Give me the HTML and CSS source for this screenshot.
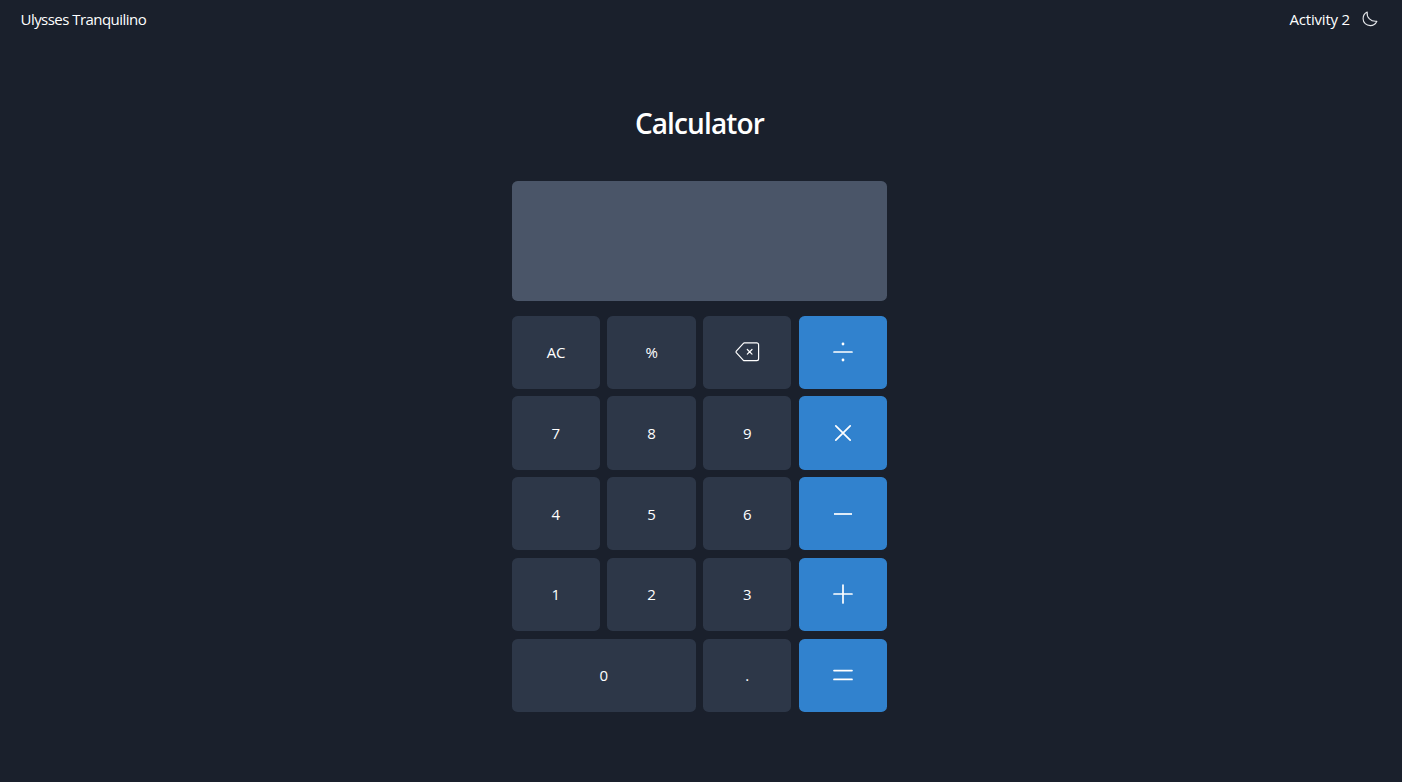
FILE: index.html
```html
<!DOCTYPE html>
<html lang="en">
<head>
<meta charset="utf-8">
<title>Calculator</title>
<link rel="stylesheet" href="styles.css">
</head>
<body>
<header class="topbar">
  <span class="author">Ulysses Tranquilino</span>
  <div class="topbar-right">
    <span class="activity">Activity 2</span>
    <svg class="moon" viewBox="0 0 16 16"><path d="M5.2 1.1C4.4 6.2 8.7 11 14.9 10.200C13.500 13.200 11.100 14.600 8.300 14.600C4.300 14.600 1.100 11.700 1.100 7.800C1.100 4.800 2.700 2.300 5.200 1.100Z"/></svg>
  </div>
</header>
<main class="calculator">
  <h1 class="title">Calculator</h1>
  <div class="display"></div>
  <div class="keys">
    <button class="key"><span class="label caps">AC</span></button>
    <button class="key"><span class="label percent">%</span></button>
    <button class="key"><svg class="icon backspace" viewBox="0 0 26 26"><path d="M10.400 3.900H22.700A1.900 1.900 0 0 1 24.600 5.800V19.800A1.900 1.900 0 0 1 22.700 21.700H10.400Q9.800 21.700 9.400 21.300L2.300 13.700Q1.700 12.900 2.300 12.100L9.400 4.300Q9.800 3.900 10.400 3.900Z"/><path d="M13.300 10.500l4.700 4.700M18 10.500l-4.700 4.700"/></svg></button>
    <button class="key operator"><svg class="icon" viewBox="0 0 26 26"><path d="M4 13H22"/><circle class="dot" cx="13" cy="5" r="1.400"/><circle class="dot" cx="13" cy="21" r="1.400"/></svg></button>
    <button class="key"><span class="label">7</span></button>
    <button class="key"><span class="label">8</span></button>
    <button class="key"><span class="label">9</span></button>
    <button class="key operator"><svg class="icon" viewBox="0 0 26 26"><path d="M5.800 5.800l14.400 14.400M20.200 5.800l-14.400 14.400"/></svg></button>
    <button class="key"><span class="label">4</span></button>
    <button class="key"><span class="label">5</span></button>
    <button class="key"><span class="label">6</span></button>
    <button class="key operator"><svg class="icon" viewBox="0 0 26 26"><path class="butt" d="M4 13H22"/></svg></button>
    <button class="key"><span class="label">1</span></button>
    <button class="key"><span class="label">2</span></button>
    <button class="key"><span class="label">3</span></button>
    <button class="key operator"><svg class="icon" viewBox="0 0 26 26"><path d="M4 13H22M13 4V22"/></svg></button>
    <button class="key wide"><span class="label">0</span></button>
    <button class="key"><span class="label">.</span></button>
    <button class="key operator"><svg class="icon" viewBox="0 0 26 26"><path d="M4 8.600H22M4 17.400H22"/></svg></button>
  </div>
</main>
</body>
</html>
```
FILE: styles.css
```css
body {
  margin: 0;
  height: 782px;
  overflow: hidden;
  background: #1a202c;
  color: #fff;
  font-family: "Segoe UI", "Open Sans", "Noto Sans", sans-serif;
  font-size: 15px;
}
.topbar {
  display: flex;
  justify-content: space-between;
  align-items: center;
  height: 38px;
  padding: 0 24px 0 20.5px;
}
.author {
  letter-spacing: -0.54px;
}
.topbar-right {
  display: flex;
  align-items: center;
  gap: 12px;
}
.activity {
  letter-spacing: -0.2px;
}
.moon {
  width: 16px;
  height: 16px;
  fill: none;
  stroke: #e6e8ec;
  stroke-width: 1.1;
  stroke-linejoin: round;
}
.calculator {
  width: 375.2px;
  margin-left: 511.8px;
  padding-top: 65px;
}
.title {
  margin: 0 0 37.5px;
  height: 40px;
  line-height: 40px;
  text-align: center;
  font-size: 28px;
  font-weight: 600;
  letter-spacing: -0.88px;
}
.display {
  height: 120px;
  border-radius: 5.6px;
  background: #4a5568;
}
.keys {
  display: grid;
  grid-template-columns: repeat(4, 1fr);
  grid-auto-rows: 73.2px;
  gap: 7.55px 7.5px;
  margin-top: 15.1px;
}
.key {
  display: flex;
  align-items: center;
  justify-content: center;
  padding: 0;
  border: 0;
  border-radius: 5.6px;
  background: #2d3748;
  color: #fff;
  font: inherit;
}
.wide {
  grid-column: span 2;
}
.operator {
  background: #3182ce;
}
.caps {
  letter-spacing: -0.3px;
}
.percent {
  letter-spacing: -0.2px;
}
.icon {
  width: 26px;
  height: 26px;
  fill: none;
  stroke: #fff;
  stroke-width: 1.7;
  stroke-linecap: round;
}
.backspace {
  stroke-width: 1.2;
}
.butt {
  stroke-linecap: butt;
}
.dot {
  fill: #fff;
  stroke: none;
}
```
